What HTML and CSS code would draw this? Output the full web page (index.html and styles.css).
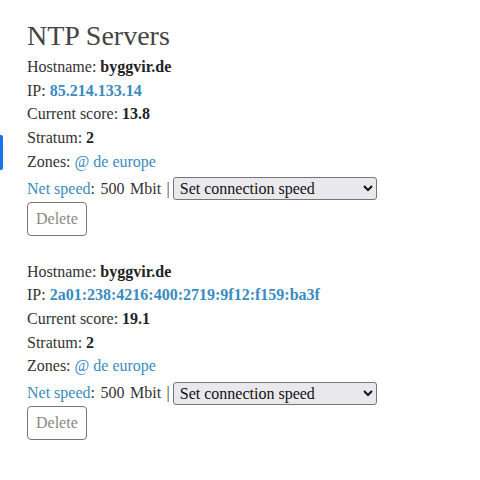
FILE: index.html
```html
<!DOCTYPE html>
<html>
<head>
<meta charset="utf-8">
<link rel="stylesheet" href="styles.css">
</head>
<body>
<div class="edge-tab"></div>
<main class="page">
  <h1 class="title">NTP Servers</h1>
  <section class="server">
    <div class="row">Hostname: <b>byggvir.de</b></div>
    <div class="row">IP: <a class="link strong" href="#">85.214.133.14</a></div>
    <div class="row">Current score: <b>13.8</b></div>
    <div class="row">Stratum: <b>2</b></div>
    <div class="row">Zones: <a class="link" href="#">@</a> <a class="link" href="#">de</a> <a class="link" href="#">europe</a></div>
    <div class="row speed"><span><a class="link" href="#">Net speed</a><span class="speed-value">: 500 Mbit |</span></span><select class="select"><option>Set connection speed</option></select></div>
    <div class="actions"><button class="btn">Delete</button></div>
  </section>
  <section class="server">
    <div class="row">Hostname: <b>byggvir.de</b></div>
    <div class="row">IP: <a class="link strong" href="#">2a01:238:4216:400:2719:9f12:f159:ba3f</a></div>
    <div class="row">Current score: <b>19.1</b></div>
    <div class="row">Stratum: <b>2</b></div>
    <div class="row">Zones: <a class="link" href="#">@</a> <a class="link" href="#">de</a> <a class="link" href="#">europe</a></div>
    <div class="row speed"><span><a class="link" href="#">Net speed</a><span class="speed-value">: 500 Mbit |</span></span><select class="select"><option>Set connection speed</option></select></div>
    <div class="actions"><button class="btn">Delete</button></div>
  </section>
</main>
</body>
</html>
```
FILE: styles.css
```css
html, body {
  margin: 0;
  padding: 0;
  background: #fff;
}
body {
  font-family: "Liberation Serif", "Times New Roman", serif;
  font-size: 16px;
  color: #333;
}
.edge-tab {
  position: absolute;
  left: 0;
  top: 135px;
  width: 3px;
  height: 35px;
  background: #1a73e8;
  border-radius: 0 2px 2px 0;
}
.page {
  padding: 19px 27px 0;
}
.title {
  margin: 0 0 2px;
  font-size: 28px;
  line-height: 34px;
  font-weight: normal;
  color: #444;
}
.server {
  display: flex;
  flex-direction: column;
  margin-bottom: 24px;
}
.row {
  line-height: 23.7px;
}
.row b {
  color: #222;
}
.link {
  color: #3a8bc1;
  text-decoration: none;
}
.link.strong {
  font-weight: bold;
}
.speed {
  display: flex;
  align-items: center;
  white-space: pre;
  margin-top: 2px;
  height: 26px;
}
.speed-value {
  word-spacing: 1.5px;
  color: #333;
}
.select {
  font-family: "Liberation Serif", "Times New Roman", serif;
  font-size: 16px;
  color: #111;
  width: 204px;
  height: 23px;
  margin-left: 3px;
  padding: 0 2px;
  background: #e9e9ed;
  border: 1px solid #767676;
  border-radius: 3px;
}
.actions {
  display: flex;
}
.btn {
  font-family: "Liberation Serif", "Times New Roman", serif;
  font-size: 16px;
  color: #888;
  background: #fff;
  border: 1px solid #777;
  border-radius: 4px;
  padding: 7px 8px;
  line-height: 18px;
}
```
